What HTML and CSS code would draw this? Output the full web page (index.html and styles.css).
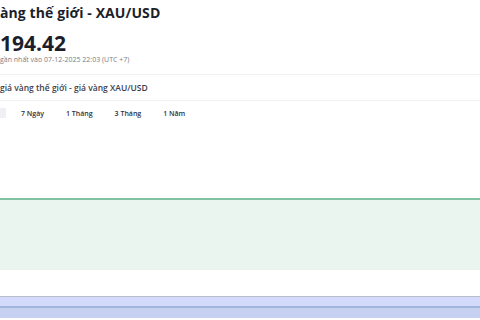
FILE: index.html
```html
<!DOCTYPE html>
<html lang="vi">
<head>
  <meta charset="UTF-8" />
  <meta name="viewport" content="width=device-width, initial-scale=1.0"/>
  <title>Giá vàng thế giới - XAU/USD</title>
  <link rel="stylesheet" href="styles.css">
</head>
<body>
  <div class="page">
    <h1 class="title">àng thế giới - XAU/USD</h1>
    <div class="price">194.42</div>
    <div class="updated">gần nhất vào 07-12-2025 22:03 (UTC +7)</div>

    <div class="chart-head">giá vàng thế giới - giá vàng XAU/USD</div>

    <div class="tabs">
      <span class="tab active"></span>
      <span class="tab">7 Ngày</span>
      <span class="tab">1 Tháng</span>
      <span class="tab">3 Tháng</span>
      <span class="tab">1 Năm</span>
    </div>

    <div class="chart">
      <div class="chart-top"></div>
      <div class="chart-area"></div>
    </div>

    <div class="navigator">
      <div class="nav-band"></div>
      <div class="nav-series"></div>
    </div>
  </div>
</body>
</html>
```

FILE: styles.css
```css
html, body {
  margin: 0;
  padding: 0;
  background: #fff;
  overflow: hidden;
}
.page {
  width: 480px;
  height: 320px;
  font-family: "Open Sans", Arial, sans-serif;
  color: #1c1f2b;
}
.title {
  margin: 0;
  padding-top: 3px;
  font-size: 14px;
  font-weight: 700;
  line-height: 20px;
  letter-spacing: 0.1px;
}
.price {
  margin-top: 10px;
  font-size: 21px;
  font-weight: 700;
  line-height: 20px;
}
.updated {
  margin-top: 3px;
  font-size: 7px;
  color: #7a7d86;
  line-height: 8px;
}
.chart-head {
  margin-top: 10px;
  height: 25px;
  line-height: 25px;
  border-top: 1px solid #f1f1f3;
  border-bottom: 1px solid #f1f1f3;
  font-size: 8.5px;
  font-weight: 600;
  color: #3d404a;
}
.tabs {
  display: flex;
  align-items: center;
  height: 14px;
  margin-top: 5px;
  font-size: 7px;
  font-weight: 600;
  color: #2e3140;
}
.tab {
  margin-right: 22px;
}
.tab.active {
  width: 6px;
  height: 10px;
  background: #eff0f3;
  margin-right: 15px;
}
.chart {
  height: 176px;
  display: flex;
  flex-direction: column;
}
.chart-top {
  height: 78px;
}
.chart-area {
  height: 70px;
  border-top: 2px solid #7fc1a0;
  background: #eaf5ef;
}
.navigator {
  border-top: 1px solid #b9bdcc;
  height: 21px;
}
.nav-band {
  height: 9px;
  background: #d3dafb;
}
.nav-series {
  height: 10px;
  border-top: 2px solid #a0b5da;
  background: #c6d1f2;
}
```
